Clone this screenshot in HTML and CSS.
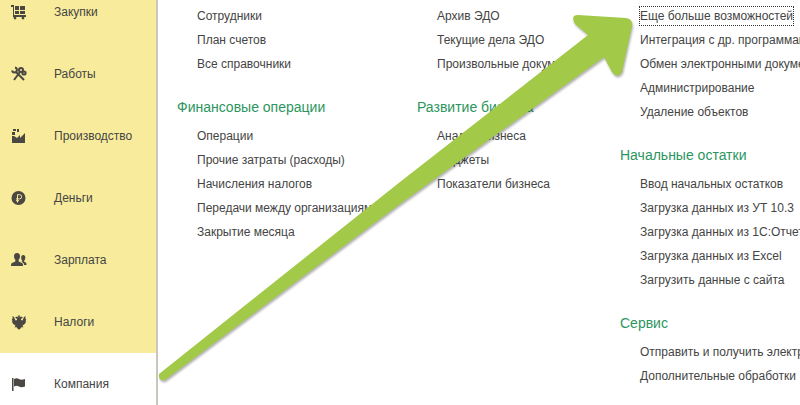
FILE: index.html
```html
<!DOCTYPE html>
<html lang="ru">
<head>
  <meta charset="UTF-8">
  <title>Компания</title>
  <meta name="viewport" content="width=device-width, initial-scale=1.0">
  <link rel="stylesheet" href="styles.css">
</head>
<body>
  <div class="app">
    <nav class="sidebar">
      <a class="section" href="#">
        <svg class="icon" viewBox="0 0 16 16"><path d="M0 1h3v10h12v2H2V3H0zM4 2h4v4H4zM9 2h5v4H9zM4 7h4v3H4zM9 7h5v3H9z"/><circle cx="4" cy="14" r="1.4"/><circle cx="12" cy="14" r="1.4"/></svg>
        Закупки
      </a>
      <a class="section" href="#">
        <svg class="icon" viewBox="0 0 16 16"><path class="line" d="M5 6l8 8M9 6l-6 8"/><path class="thin" d="M4 1.500a2.500 2.500 0 1 1-3 3"/><circle class="thin" cx="10" cy="4" r="2"/><circle class="thin" cx="13" cy="7" r="1.600"/></svg>
        Работы
      </a>
      <a class="section" href="#">
        <svg class="icon" viewBox="0 0 16 16"><path d="M1 15V8h2l3 2 3-3v3l5-5v10zM1 4h3v3H1zM2 1h3v2H2zM6 1h2v3H6z"/></svg>
        Производство
      </a>
      <a class="section" href="#">
        <svg class="icon" viewBox="0 0 16 16"><circle cx="7.500" cy="8" r="7"/><path class="cut bold" d="M6.500 12.500V4.700h2a2.100 2.100 0 0 1 0 4.200H5M5 10.700h3"/></svg>
        Деньги
      </a>
      <a class="section" href="#">
        <svg class="icon" viewBox="0 0 16 16"><path d="M6 1c2 0 3 1 3 3.200 0 1.600-.5 2.800-1.300 3.400v2L11 11c1 .5 1 1.500 1 3H0c0-1.500 0-2.500 1-3l3.300-1.400v-2C3.500 7 3 5.800 3 4.200 3 2 4 1 6 1zM12 3c1.700 0 2.300 1 2.300 2.500S13.800 8 13.200 8.500v1.300l1.600.8c.7.400.7 1.400.7 2.400H13c0-1.500-.5-2.500-2.500-3.300l.7-.5V8.500C10.500 8 10.200 6.500 10.200 5.500 10.200 4 11 3 12 3z"/></svg>
        Зарплата
      </a>
      <a class="section" href="#">
        <svg class="icon" viewBox="0 0 16 16"><path d="M8 1l1 1-.5 1.500L10 2.500l2 1-2 1.500v1l1.500.5L13 3l1.500-1-.2 3 .9-.5-.6 3 .6 0-1.400 2.500-2.300 1.500 1 2-1.800-.5L9.500 14.500 8 15.800l-1.500-1.300L5.300 13l-1.800.5 1-2L2.200 10 .8 7.500h.6l-.6-3 .9.5-.2-3L3 3l1.500 3.500L6 6V5L4 3.500l2-1 1.500 1L7 2z"/></svg>
        Налоги
      </a>
      <a class="section active" href="#">
        <svg class="icon" viewBox="0 0 16 16"><path d="M1 2h1.500v13H1zM3 3c2-1.200 3.500-1 5 0s3.500.8 6 0v7.500c-2.500 1-4.500 1-6 0s-3-1-5 0z"/></svg>
        Компания
      </a>
    </nav>

    <main class="content">
      <div class="column">
        <ul class="links">
          <li><a href="#">Сотрудники</a></li>
          <li><a href="#">План счетов</a></li>
          <li><a href="#">Все справочники</a></li>
        </ul>
        <h2>Финансовые операции</h2>
        <ul class="links">
          <li><a href="#">Операции</a></li>
          <li><a href="#">Прочие затраты (расходы)</a></li>
          <li><a href="#">Начисления налогов</a></li>
          <li><a href="#">Передачи между организациями</a></li>
          <li><a href="#">Закрытие месяца</a></li>
        </ul>
      </div>

      <div class="column">
        <ul class="links">
          <li><a href="#">Архив ЭДО</a></li>
          <li><a href="#">Текущие дела ЭДО</a></li>
          <li><a href="#">Произвольные документы</a></li>
        </ul>
        <h2>Развитие бизнеса</h2>
        <ul class="links">
          <li><a href="#">Анализ бизнеса</a></li>
          <li><a href="#">Бюджеты</a></li>
          <li><a href="#">Показатели бизнеса</a></li>
        </ul>
      </div>

      <div class="column">
        <ul class="links">
          <li><a class="focused" href="#">Еще больше возможностей</a></li>
          <li><a href="#">Интеграция с др. программами</a></li>
          <li><a href="#">Обмен электронными документами</a></li>
          <li><a href="#">Администрирование</a></li>
          <li><a href="#">Удаление объектов</a></li>
        </ul>
        <h2>Начальные остатки</h2>
        <ul class="links">
          <li><a href="#">Ввод начальных остатков</a></li>
          <li><a href="#">Загрузка данных из УТ 10.3</a></li>
          <li><a href="#">Загрузка данных из 1С:Отчетность</a></li>
          <li><a href="#">Загрузка данных из Excel</a></li>
          <li><a href="#">Загрузить данные с сайта</a></li>
        </ul>
        <h2>Сервис</h2>
        <ul class="links">
          <li><a href="#">Отправить и получить электронную почту</a></li>
          <li><a href="#">Дополнительные обработки</a></li>
        </ul>
      </div>
    </main>

    <!-- Arrow from the active section to the focused link -->
    <svg class="arrow" width="480" height="374" viewBox="0 0 480 374">
      <path d="M1 364L242 172L430 25L417 14Q412 5 420 5L468 8Q475 9 474 16L464 62Q459 69 454 62L446 47L242 194L7 370Q0 371 1 364z"/>
    </svg>
  </div>
</body>
</html>
```

FILE: styles.css
```css
* {
  box-sizing: border-box;
}

body {
  margin: 0;
  font-family: "Liberation Sans", Arial, sans-serif;
  font-size: 12px;
  color: #444;
  background-color: #fff;
}

a {
  color: inherit;
  text-decoration: none;
}

.app {
  position: relative;
  display: flex;
  height: 100vh;
  overflow: hidden;
}

/* Left section panel, scrolled down to its last items */
.sidebar {
  display: flex;
  flex-direction: column;
  justify-content: flex-end;
  flex: none;
  width: 158px;
  margin-bottom: -10px;
  border-right: 2px solid #c9c6be;
}

.section {
  display: flex;
  align-items: center;
  flex: none;
  gap: 27px;
  height: 62px;
  padding-left: 11px;
  background-color: #f8ec9c;
}

.section.active {
  background-color: #fff;
}

.icon {
  width: 16px;
  height: 16px;
  fill: #4b4742;
}

.icon .line,
.icon .thin {
  fill: none;
  stroke: #4b4742;
  stroke-width: 2;
}

.icon .cut {
  fill: none;
  stroke: #f8ec9c;
}

/* Command columns */
.content {
  display: grid;
  grid-template-columns: 240px 203px 1fr;
  flex: 1;
  min-width: 0;
  padding: 4px 0 0 19px;
  overflow: hidden;
}

.column {
  min-width: 0;
  white-space: nowrap;
}

h2 {
  margin: 19px 0 5px;
  font-size: 14px;
  font-weight: normal;
  line-height: 24px;
  color: #2c9560;
}

.links {
  margin: 0;
  padding-left: 20px;
  list-style: none;
  line-height: 24px;
}

.focused {
  padding: 2px 0;
  outline: 1px dotted #333;
}

.arrow {
  position: absolute;
  left: 158px;
  top: 10px;
  fill: #a2c948;
  filter: drop-shadow(1px 2px 1px rgba(0, 0, 0, 0.3));
}
```
